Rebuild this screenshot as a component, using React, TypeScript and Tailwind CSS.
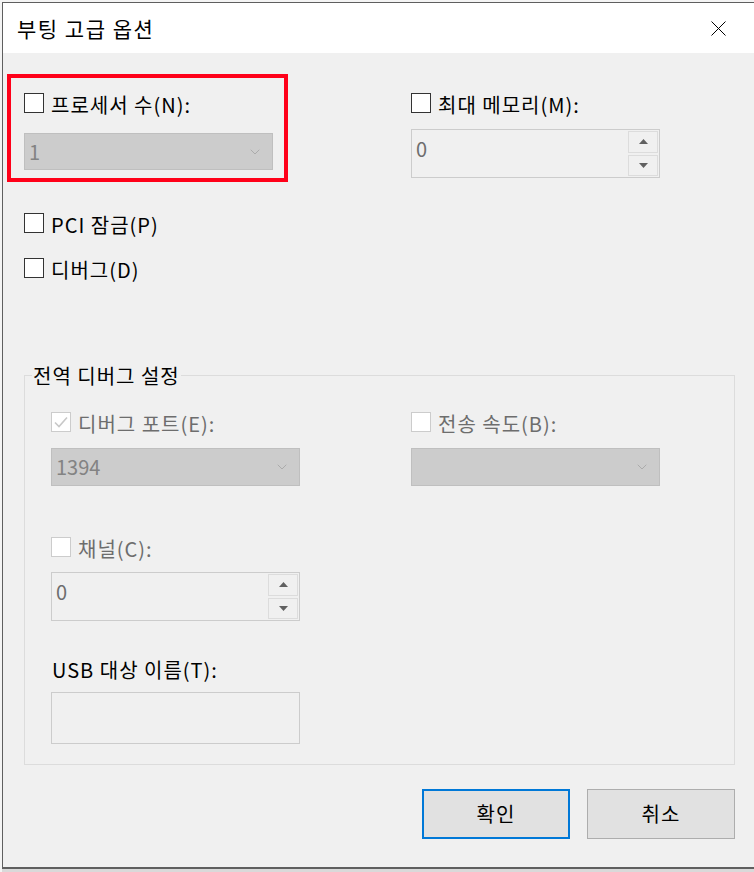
import { ChevronDown } from "lucide-react";

const font = "font-['Noto_Sans_CJK_KR','Noto_Sans',sans-serif]";

type CheckProps = {
  label: string;
  checked?: boolean;
  disabled?: boolean;
};

const CheckRow = ({ label, checked = false, disabled = false }: CheckProps) => (
  <div className="flex items-center h-[20px] gap-[7px]">
    <span
      className={
        "w-[20px] h-[20px] shrink-0 bg-white border flex items-center justify-center " +
        (disabled ? "border-[#cccccc]" : "border-[#333333]")
      }
    >
      {checked && (
        <svg width="14" height="12" viewBox="0 0 14 12">
          <path d="M1 6.5 L5 10.5 L13 1.5" fill="none" stroke="#c8c8c8" strokeWidth="1.6" />
        </svg>
      )}
    </span>
    <span className={"mt-[3px] text-[20px] tracking-[1px] leading-[20px] whitespace-nowrap " + (disabled ? "text-[#6d6d6d]" : "text-black")}>
      {label}
    </span>
  </div>
);

const Combo = ({ value, className = "" }: { value?: string; className?: string }) => (
  <div className={"w-[249px] bg-[#cccccc] border border-[#bfbfbf] flex items-center justify-between pl-[4px] pr-[9px] " + className}>
    <span className="text-[20px] leading-[20px] text-[#838383]">{value}</span>
    <ChevronDown size={16} strokeWidth={1} className="text-[#9a9a9a]" />
  </div>
);

const Arrow = ({ up }: { up?: boolean }) => (
  <svg width="9" height="5" viewBox="0 0 9 5">
    <path d={up ? "M0 5 L4.5 0 L9 5 Z" : "M0 0 L4.5 5 L9 0 Z"} fill="#606060" />
  </svg>
);

const Spin = ({ value, className = "" }: { value: string; className?: string }) => (
  <div className={"w-[249px] h-[49px] border border-[#cccccc] bg-[#f0f0f0] flex " + className}>
    <div className="flex-1 pl-[4px] pt-[9px] text-[20px] leading-[20px] text-[#6d6d6d]">{value}</div>
    <div className="w-[31px] flex flex-col gap-[2px] py-[1px] pr-[1px]">
      <div className="flex-1 border border-[#dcdcdc] flex items-center justify-center">
        <Arrow up />
      </div>
      <div className="flex-1 border border-[#dcdcdc] flex items-center justify-center">
        <Arrow />
      </div>
    </div>
  </div>
);

export default function App() {
  return (
    <div className={"w-[754px] h-[872px] overflow-hidden bg-[#f4f4f4] pl-[2px] pt-[2px] relative " + font}>
      <div className="w-[760px] h-[867px] border-l border-t border-b-2 border-[#5f5f5f] bg-[#f0f0f0] flex flex-col">
        {/* title bar */}
        <div className="h-[50px] bg-white flex items-center justify-between pl-[14px] pr-[36px]">
          <span className="text-[21px] tracking-[1.5px] leading-[24px] text-black">부팅 고급 옵션</span>
          <svg width="15" height="15" viewBox="0 0 15 15">
            <path d="M0.5 0.5 L14.5 14.5 M14.5 0.5 L0.5 14.5" stroke="#000" strokeWidth="1" />
          </svg>
        </div>

        <div className="pl-[21px] pt-[40px] w-[754px]">
          <div className="grid grid-cols-[387px_1fr]">
            <div>
              <CheckRow label="프로세서 수(N):" />
              <Combo value="1" className="mt-[20px] h-[37px]" />
            </div>
            <div>
              <CheckRow label="최대 메모리(M):" />
              <Spin value="0" className="mt-[16px]" />
            </div>
          </div>

          <div className="mt-[35px]">
            <CheckRow label="PCI 잠금(P)" />
          </div>
          <div className="mt-[25px]">
            <CheckRow label="디버그(D)" />
          </div>

          <fieldset className="mt-[84px] w-[711px] border border-[#dcdcdc] p-0">
            <legend className="ml-[7px] px-[1px] pt-[2px] text-[20px] tracking-[1px] leading-[24px] text-black">
              전역 디버그 설정
            </legend>
            <div className="pl-[26px] pt-[24px] pb-[20px]">
              <div className="grid grid-cols-[360px_1fr]">
                <div>
                  <CheckRow label="디버그 포트(E):" checked disabled />
                  <Combo value="1394" className="mt-[16px] h-[38px]" />
                </div>
                <div>
                  <CheckRow label="전송 속도(B):" disabled />
                  <Combo className="mt-[16px] h-[38px]" />
                </div>
              </div>

              <div className="mt-[51px]">
                <CheckRow label="채널(C):" disabled />
                <Spin value="0" className="mt-[15px]" />
              </div>

              <div className="mt-[37px] h-[20px] flex items-center pl-[1px] pt-[3px] text-[20px] tracking-[1px] leading-[20px] text-black">
                USB 대상 이름(T):
              </div>
              <div className="mt-[14px] w-[249px] h-[52px] border border-[#cccccc] bg-[#f0f0f0]" />
            </div>
          </fieldset>

          <div className="mt-[24px] w-[711px] flex justify-end gap-[17px]">
            <button className="w-[148px] h-[50px] bg-[#e1e1e1] border-2 border-[#0078d7] text-[20px] tracking-[1px] text-black">
              확인
            </button>
            <button className="w-[148px] h-[50px] bg-[#e1e1e1] border border-[#adadad] text-[20px] tracking-[1px] text-black">
              취소
            </button>
          </div>
        </div>
      </div>
      <div className="h-[3px] bg-[#d9d9d9]" />

      {/* red highlight annotation */}
      <div className="absolute left-[7px] top-[74px] w-[281px] h-[108px] border-4 border-[#ff0019]" />
    </div>
  );
}
